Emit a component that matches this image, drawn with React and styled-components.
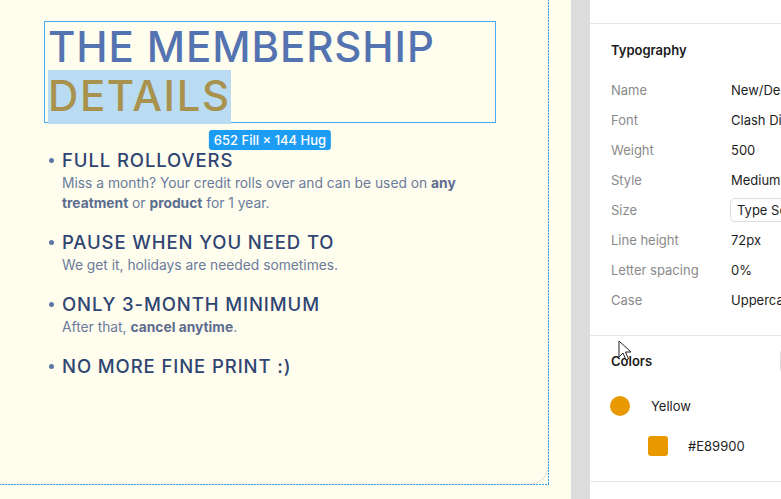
import React from "react";
import styled, { createGlobalStyle } from "styled-components";

const Global = createGlobalStyle`
  html, body { margin: 0; padding: 0; overflow: hidden; background: #fffdee; }
  body { font-family: Inter, "Noto Sans", sans-serif; }
  * { box-sizing: border-box; }
`;

const Page = styled.div`
  display: flex;
  width: 781px;
  height: 499px;
  overflow: hidden;
  position: relative;
`;

const Canvas = styled.div`
  width: 571px;
  flex: none;
  height: 100%;
  background: #fffdee;
  overflow: hidden;
`;

const Card = styled.div`
  position: relative;
  margin: -40px 0 0 -40px;
  width: 589px;
  height: 525px;
  border: 1px solid #dcdcd6;
  border-radius: 20px;
  padding: 60px 0 0 83px;
  &::after {
    content: "";
    position: absolute;
    inset: -1px;
    pointer-events: none;
    background-image:
      repeating-linear-gradient(to bottom, #3d9ef0 0 2px, transparent 2px 3px),
      repeating-linear-gradient(to right, #3d9ef0 0 2px, transparent 2px 3px);
    background-size: 1px 100%, 100% 1px;
    background-position: right top, left bottom;
    background-repeat: no-repeat;
  }
`;

const TitleBox = styled.div`
  position: relative;
  width: 452px;
  border: 1.5px solid #4aa8f0;
  padding: 0 0 0 3px;
  height: 102px;
`;

const Title = styled.h1`
  margin: 0;
  font-family: Inter, sans-serif;
  font-weight: 500;
  font-size: 42px;
  line-height: 49px;
  letter-spacing: 0.9px;
  color: #5473b1;
  text-transform: uppercase;
  white-space: nowrap;
`;

const Highlight = styled.span`
  color: #a8924e;
  background: #b9dcf2;
  letter-spacing: 1.6px;
  padding-bottom: 3px;
`;

const SizeTag = styled.div`
  position: absolute;
  top: calc(100% + 8px);
  left: 50%;
  transform: translateX(-50%);
  background: #1c9cf2;
  color: #fff;
  font-size: 13px;
  font-weight: 500;
  line-height: 20px;
  height: 20px;
  padding: 0 5px;
  border-radius: 3px;
  white-space: nowrap;
`;

const List = styled.ul`
  list-style: none;
  margin: 25px 0 0 0;
  padding: 0;
  display: flex;
  flex-direction: column;
  gap: 17px;
`;

const Item = styled.li`
  position: relative;
  padding-left: 18px;
  &::before {
    content: "";
    position: absolute;
    left: 5px;
    top: 10px;
    width: 5px;
    height: 5px;
    border-radius: 50%;
    background: #5d77a5;
  }
`;

const ItemHead = styled.div`
  font-size: 18.5px;
  font-weight: 500;
  line-height: 25px;
  letter-spacing: 0.9px;
  color: #2f4572;
  text-transform: uppercase;
  white-space: nowrap;
`;

const ItemText = styled.div`
  font-size: 13.8px;
  line-height: 20px;
  color: #6b7b9c;
  width: 400px;
  b { font-weight: 700; color: #5d6d8f; }
`;

const Gutter = styled.div`
  width: 19px;
  flex: none;
  background: #dcdcdc;
`;

const Panel = styled.div`
  width: 230px;
  flex: none;
  background: #fff;
  display: flex;
  flex-direction: column;
`;

const TopStrip = styled.div`
  height: 24px;
  border-bottom: 1px solid #e6e6e6;
  flex: none;
`;

const Section = styled.section`
  padding: ${(p) => p.$top}px 16px ${(p) => p.$bottom}px 21px;
  border-bottom: 1px solid #e6e6e6;
`;

const SectionHead = styled.div`
  display: flex;
  align-items: center;
  justify-content: space-between;
  height: 18px;
  font-size: 13px;
  font-weight: 600;
  color: #1a1a1a;
  margin-bottom: 16px;
`;

const MiniButton = styled.div`
  width: 24px;
  height: 24px;
  border: 1px solid #dcdcdc;
  border-radius: 4px;
`;

const Rows = styled.div`
  display: grid;
  grid-template-columns: 120px 1fr;
`;

const Label = styled.div`
  height: 30px;
  display: flex;
  align-items: center;
  font-size: 13px;
  color: #8a8a8a;
  white-space: nowrap;
`;

const Value = styled.div`
  height: 30px;
  display: flex;
  align-items: center;
  font-size: 13px;
  color: #1e1e1e;
  white-space: nowrap;
`;

const SelectBox = styled.div`
  height: 24px;
  margin-left: -1px;
  padding: 0 8px 0 6px;
  border: 1px solid #dcdcdc;
  border-radius: 5px;
  display: flex;
  align-items: center;
  width: 140px;
`;

const ColorRow = styled.div`
  display: flex;
  align-items: center;
  height: 40px;
  gap: ${(p) => p.$gap}px;
  padding-left: ${(p) => p.$indent}px;
  font-size: 13px;
  color: #1e1e1e;
`;

const Swatch = styled.div`
  width: 20px;
  height: 20px;
  background: #e89900;
  border-radius: ${(p) => (p.$round ? "50%" : "3px")};
  margin-left: ${(p) => (p.$round ? -1 : 0)}px;
`;

const Cursor = styled.svg`
  position: absolute;
  left: 618px;
  top: 340px;
  pointer-events: none;
`;

const rows = [
  ["Name", "New/Desktop/H2"],
  ["Font", "Clash Display"],
  ["Weight", "500"],
  ["Style", "Medium"],
  ["Size", null],
  ["Line height", "72px"],
  ["Letter spacing", "0%"],
  ["Case", "Uppercase"],
];

export default function App() {
  return (
    <>
      <Global />
      <Page>
        <Canvas>
          <Card>
            <TitleBox>
              <Title>
                The Membership
                <br />
                <Highlight>Details</Highlight>
              </Title>
              <SizeTag>652 Fill × 144 Hug</SizeTag>
            </TitleBox>
            <List>
              <Item>
                <ItemHead>Full Rollovers</ItemHead>
                <ItemText>
                  Miss a month? Your credit rolls over and can be used on <b>any treatment</b> or{" "}
                  <b>product</b> for 1 year.
                </ItemText>
              </Item>
              <Item>
                <ItemHead>Pause when you need to</ItemHead>
                <ItemText>We get it, holidays are needed sometimes.</ItemText>
              </Item>
              <Item>
                <ItemHead>Only 3-month minimum</ItemHead>
                <ItemText>
                  After that, <b>cancel anytime</b>.
                </ItemText>
              </Item>
              <Item>
                <ItemHead>No more fine print :)</ItemHead>
              </Item>
            </List>
          </Card>
        </Canvas>
        <Gutter />
        <Panel>
          <TopStrip />
          <Section $top={17} $bottom={20}>
            <SectionHead>Typography</SectionHead>
            <Rows>
              {rows.map(([l, v]) => (
                <React.Fragment key={l}>
                  <Label>{l}</Label>
                  <Value>{v === null ? <SelectBox>Type Scale</SelectBox> : v}</Value>
                </React.Fragment>
              ))}
            </Rows>
          </Section>
          <Section $top={16} $bottom={15}>
            <SectionHead>
              Colors
              <MiniButton />
            </SectionHead>
            <ColorRow $gap={21} $indent={0}>
              <Swatch $round />
              Yellow
            </ColorRow>
            <ColorRow $gap={20} $indent={37}>
              <Swatch />
              #E89900
            </ColorRow>
          </Section>
        </Panel>
        <Cursor width="14" height="22" viewBox="0 0 14 22">
          <path d="M1 1 L1 17 L5 13 L8 20 L10.5 19 L7.5 12 L13 12 Z" fill="#fff" stroke="#222" strokeWidth="1" strokeLinejoin="round" />
        </Cursor>
      </Page>
    </>
  );
}
